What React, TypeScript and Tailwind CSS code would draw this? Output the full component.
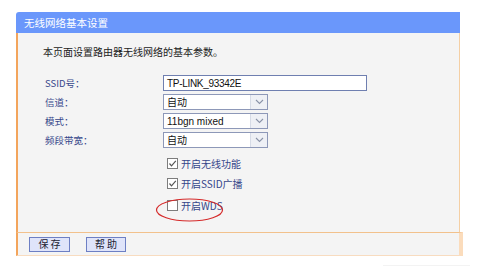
import React from 'react';

const cjk = '"Noto Sans CJK SC", "Noto Sans", sans-serif';

const rows = [
  { label: 'SSID号：', kind: 'text', value: 'TP-LINK_93342E' },
  { label: '信道：', kind: 'select', value: '自动' },
  { label: '模式：', kind: 'select', value: '11bgn mixed' },
  { label: '频段带宽：', kind: 'select', value: '自动' },
];

const checks = [
  { text: '开启无线功能', on: true, mt: 'mt-[9px]' },
  { text: '开启SSID广播', on: true, mt: 'mt-[8px]' },
  { text: '开启WDS', on: false, mt: 'mt-[10px]' },
];

function Chevron() {
  return (
    <svg width="9" height="6" viewBox="0 0 9 6" className="text-[#8a93a8]">
      <path d="M1 1 L4.5 4.5 L8 1" fill="none" stroke="currentColor" strokeWidth="1.1" />
    </svg>
  );
}

function Field({ kind, value }: { kind: string; value: string }) {
  if (kind === 'text') {
    return (
      <div className="h-[16px] w-[204px] border border-[#6f7fb0] bg-white pl-[3px] flex items-center text-[10px] text-[#111] font-['Liberation_Sans',sans-serif] tracking-[-0.3px]">
        {value}
      </div>
    );
  }
  return (
    <div className="h-[16px] w-[105px] border border-[#8d98b8] bg-white flex items-stretch">
      <div className="flex-1 pl-[3px] flex items-center text-[10px] text-[#111]" style={{ fontFamily: '"Liberation Sans", "Noto Sans CJK SC", sans-serif' }}>
        {value}
      </div>
      <div className="w-[17px] border-l border-[#d6dbe6] bg-[#eef0f5] flex items-center justify-center">
        <Chevron />
      </div>
    </div>
  );
}

function Check({ on }: { on: boolean }) {
  return (
    <div className="w-[11px] h-[11px] border border-[#7d7d7d] bg-white flex items-center justify-center">
      {on && (
        <svg width="9" height="9" viewBox="0 0 9 9">
          <path d="M1.5 4.5 L3.5 6.8 L7.8 1.8" fill="none" stroke="#555" strokeWidth="1.2" />
        </svg>
      )}
    </div>
  );
}

export default function App() {
  return (
    <div className="w-[500px] h-[269px] bg-white overflow-hidden pt-[12px] pl-[16px]" style={{ fontFamily: cjk }}>
      <div className="w-[444px]">
        <div className="h-[21px] rounded-tl-[3px] bg-[#6a97fb] pl-[8px] flex items-center text-[10.5px] text-white">
          无线网络基本设置
        </div>
        <div className="h-[199px] bg-[#f4f4f4] border-l-2 border-l-[#f3a55c] border-r border-r-[#f4cfa4] pl-[25px] pt-[13px]">
          <div className="text-[10px] leading-[12px] text-[#222]">本页面设置路由器无线网络的基本参数。</div>
          <div className="mt-[17px] ml-[2px] flex flex-col gap-[3px]">
            {rows.map((r) => (
              <div key={r.label} className="flex items-center h-[16px]">
                <div className="w-[118px] text-[9.5px] text-[#34468a]">{r.label}</div>
                <Field kind={r.kind} value={r.value} />
              </div>
            ))}
          </div>
          <div className="ml-[124px]">
            {checks.map((c) => (
              <div key={c.text} className={`relative flex items-center gap-[3px] h-[12px] ${c.mt}`}>
                <Check on={c.on} />
                <span className="text-[10px] text-[#34468a]">{c.text}</span>
                {!c.on && (
                  <svg className="absolute left-[-12px] top-[-3px]" width="69" height="26" viewBox="0 0 69 26">
                    <ellipse cx="34.5" cy="14" rx="33" ry="11" fill="none" stroke="#d52a2a" strokeWidth="1.2" />
                  </svg>
                )}
              </div>
            ))}
          </div>
        </div>
      </div>
      <div className="w-[447px] h-[24px] bg-[#f4f4f4] border-t border-t-[#f2c18c] border-b border-b-[#f8dcc0] border-l-2 border-l-[#f3a55c] border-r-4 border-r-[#fbdcbc] flex items-center pl-[11px] gap-[16px]">
        <button className="h-[15px] w-[41px] border border-[#6d7fc4] bg-[#dfe4fa] text-[10px] leading-none text-[#223]">保 存</button>
        <button className="h-[15px] w-[40px] border border-[#6d7fc4] bg-[#dfe4fa] text-[10px] leading-none text-[#223]">帮 助</button>
      </div>
      <div className="mt-[9px] ml-[367px] w-[87px] h-px bg-[#f3f3f3]" />
    </div>
  );
}
